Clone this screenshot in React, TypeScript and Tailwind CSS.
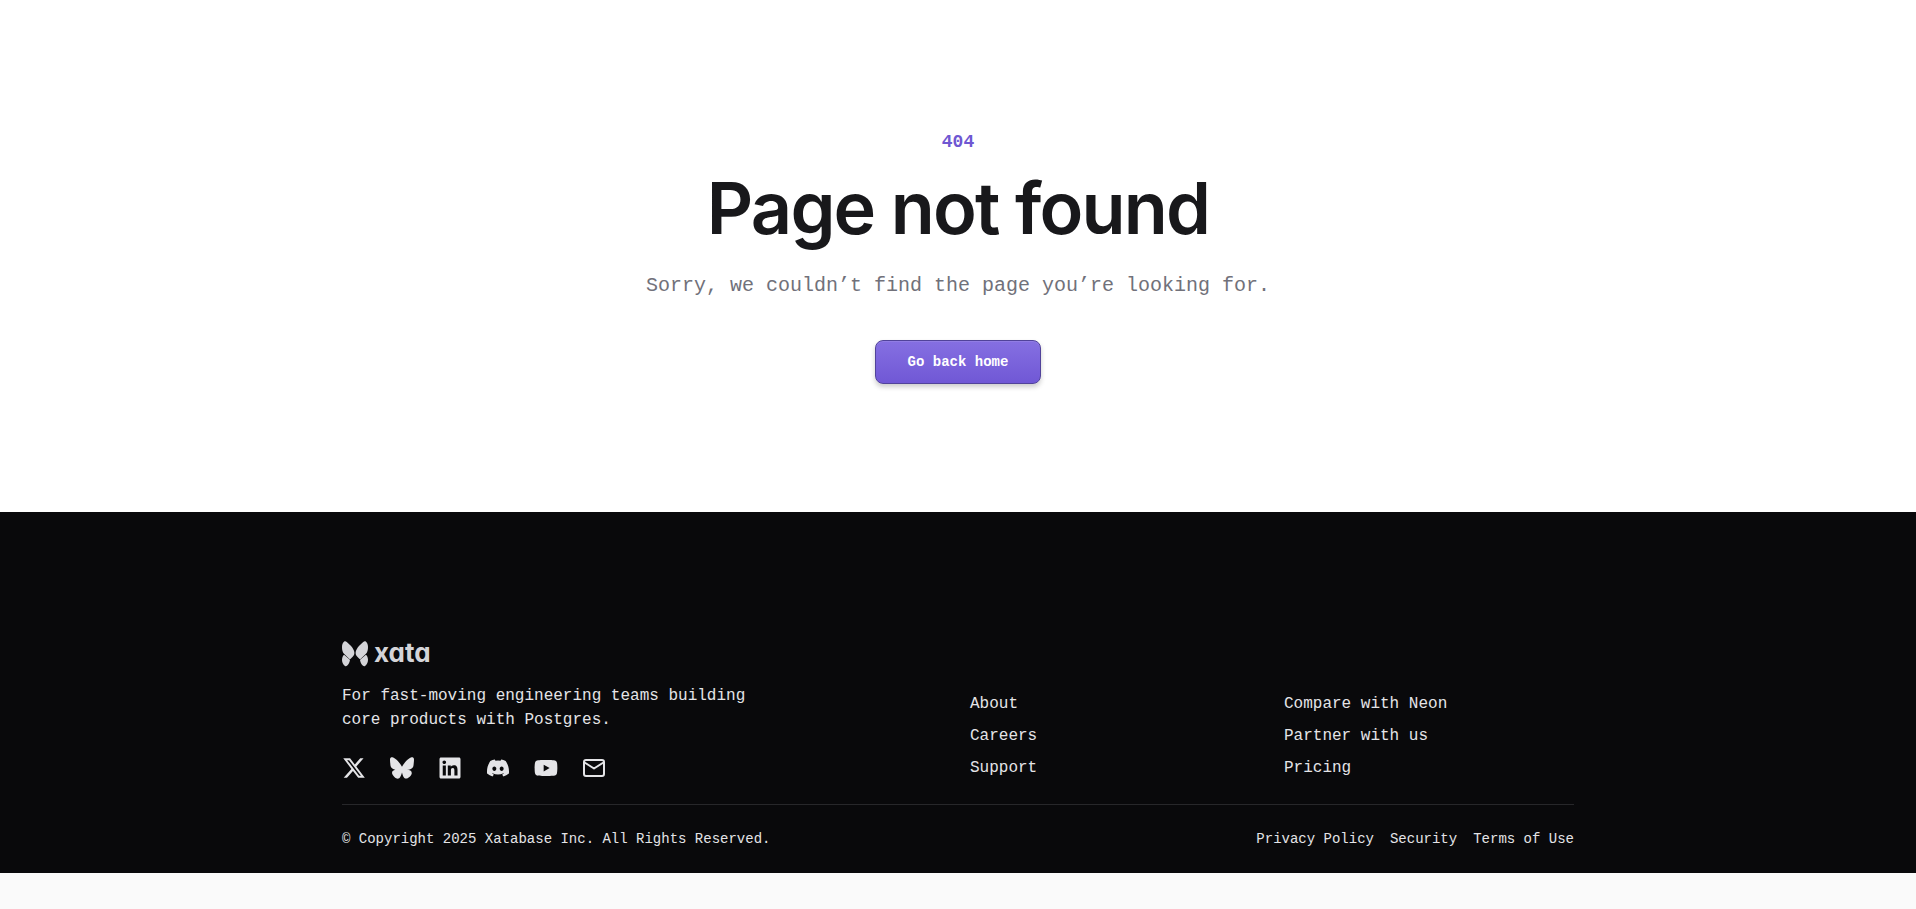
import type { SVGProps } from "react";
import { FaBluesky, FaDiscord, FaLinkedin, FaXTwitter, FaYoutube } from "react-icons/fa6";

function Mail(props: SVGProps<SVGSVGElement>) {
  return (
    <svg viewBox="0 0 24 24" fill="none" stroke="currentColor" strokeWidth="2" strokeLinecap="round" strokeLinejoin="round" aria-hidden="true" {...props}>
      <rect x="2" y="4" width="20" height="16" rx="2" />
      <path d="M2.500 6.500 12 12.500l9.500-6" />
    </svg>
  );
}

const socials = [
  { label: "X", Icon: FaXTwitter },
  { label: "Bluesky", Icon: FaBluesky },
  { label: "LinkedIn", Icon: FaLinkedin },
  { label: "Discord", Icon: FaDiscord },
  { label: "YouTube", Icon: FaYoutube },
  { label: "Email", Icon: Mail },
];

const company = ["About", "Careers", "Support"];
const product = ["Compare with Neon", "Partner with us", "Pricing"];
const legal = ["Privacy Policy", "Security", "Terms of Use"];

function Butterfly() {
  return (
    <svg viewBox="0 0 26 26" className="size-[26px]" fill="currentColor" aria-hidden="true">
      <g id="wing">
        <path d="M2.200 .5C.8 1.500 0 3.600 0 6c0 2.900.5 5 2 6.800l5.200 5c.5.500 1 .5 1.500 0l2.200-2.300c1.200-1.300 1.700-2.700 1.400-4.500C12 8.900 10.700 7 8.800 4.800L4.800 .9C3.800 0 3 0 2.200 .5Z" />
        <path d="M1.500 14.300C.5 15.500 0 17.200 0 19c.1 2.600 1.300 5 3 6 .7.400 1.400.3 2-.2 1.500-1.200 2.500-3.200 2.900-5.300.1-.5 0-.8-.3-1.100L2.700 14.200c-.4-.4-.8-.3-1.200.1Z" />
      </g>
      <use href="#wing" transform="matrix(-1 0 0 1 26 0)" />
    </svg>
  );
}

function LinkColumn({ label, items }: { label: string; items: string[] }) {
  return (
    <nav aria-label={label}>
      <ul className="flex flex-col gap-2">
        {items.map((item) => (
          <li key={item} className="leading-6">
            <a href="#" className="hover:text-white">{item}</a>
          </li>
        ))}
      </ul>
    </nav>
  );
}

export default function App() {
  return (
    <div className="min-h-screen bg-[#fafafa] font-['Liberation_Mono',monospace]">
      <main className="flex flex-col items-center bg-white px-6 py-32 text-center">
        <p className="text-lg leading-7 font-bold text-[#6f57d2]">404</p>
        <h1 className="mt-4 font-['Inter',sans-serif] text-7xl leading-none font-semibold tracking-tight text-[#18181b]">
          Page not found
        </h1>
        <p className="mt-6 text-xl leading-9 text-[#71717a]">
          Sorry, we couldn’t find the page you’re looking for.
        </p>
        <a
          href="#"
          className="mt-9 flex h-11 items-center rounded-lg border border-[#51439a] bg-linear-to-b from-[#8670e2] to-[#7057d5] bg-origin-border px-8 text-sm font-bold text-white shadow-[0_3px_5px_rgba(0,0,0,0.2),inset_0_1px_0_rgba(255,255,255,0.1)]"
        >
          Go back home
        </a>
      </main>

      <footer className="bg-[#09090b] pt-32 text-[#e4e4e7]">
        <div className="mx-auto max-w-7xl px-6">
          <div className="grid gap-6 pb-6 md:grid-cols-4 md:items-end">
            <div className="md:col-span-2">
              <a href="#" aria-label="xata" className="flex h-7 items-start gap-1.5 text-[#d4d4d8]">
                <span className="pt-px">
                  <Butterfly />
                </span>
                <span className="font-['Inter',sans-serif] text-[26px] leading-[26px] font-bold [font-feature-settings:'cv11']">
                  xata
                </span>
              </a>
              <p className="mt-4 max-w-md leading-6">
                For fast-moving engineering teams building core products with Postgres.
              </p>
              <div className="mt-6 flex gap-6">
                {socials.map(({ label, Icon }) => (
                  <a key={label} href="#" aria-label={label} className="hover:text-white">
                    <Icon className="size-6" />
                  </a>
                ))}
              </div>
            </div>
            <LinkColumn label="Company" items={company} />
            <LinkColumn label="Product" items={product} />
          </div>
          <div className="flex flex-wrap justify-between gap-4 border-t border-[#27272a] py-6 text-sm leading-5">
            <p>© Copyright 2025 Xatabase Inc. All Rights Reserved.</p>
            <nav aria-label="Legal" className="flex gap-4">
              {legal.map((item) => (
                <a key={item} href="#" className="hover:text-white">{item}</a>
              ))}
            </nav>
          </div>
        </div>
      </footer>
    </div>
  );
}
